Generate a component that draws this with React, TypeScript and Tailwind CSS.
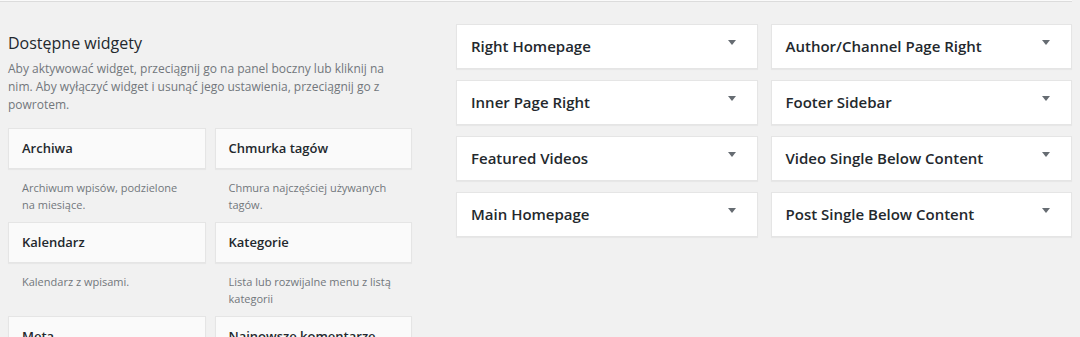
export default function App() {
  const widgets = [
    { name: "Archiwa", desc: "Archiwum wpisów, podzielone na miesiące." },
    { name: "Chmurka tagów", desc: "Chmura najczęściej używanych tagów." },
    { name: "Kalendarz", desc: "Kalendarz z wpisami." },
    { name: "Kategorie", desc: "Lista lub rozwijalne menu z listą kategorii" },
    { name: "Meta", desc: "Logowanie, kanał RSS i link do WordPress.org" },
    { name: "Najnowsze komentarze", desc: "Najnowsze komentarze na stronie." },
  ];

  const sidebars = [
    "Right Homepage",
    "Author/Channel Page Right",
    "Inner Page Right",
    "Footer Sidebar",
    "Featured Videos",
    "Video Single Below Content",
    "Main Homepage",
    "Post Single Below Content",
  ];

  return (
    <div className="h-[337px] overflow-hidden bg-[#f1f1f1] font-['Open_Sans',sans-serif] text-[#23282d]">
      {/* dolna krawędź boxa powyżej */}
      <div className="h-[2px] w-[1072px] bg-[#fafafa] border-b border-[#dcdcdc]" />

      <div className="flex items-start">
        {/* dostępne widgety */}
        <div className="ml-2 w-[404px] pt-[31px]">
          <h2 className="text-[16px] leading-[20px] font-normal">Dostępne widgety</h2>
          <p className="mt-[7px] text-[12px] leading-[18px] text-[#72777c] pr-[10px]">
            Aby aktywować widget, przeciągnij go na panel boczny lub kliknij na nim. Aby wyłączyć widget i usunąć jego ustawienia, przeciągnij go z powrotem.
          </p>
          <div className="mt-[14px] grid grid-cols-2 gap-x-[9px]">
            {widgets.map((w) => (
              <div key={w.name}>
                <div className="h-[41px] flex items-center px-[13px] bg-[#fafafa] border border-[#e5e5e5] shadow-[0_1px_1px_rgba(0,0,0,0.04)] text-[13px] font-semibold">
                  {w.name}
                </div>
                <p className="pl-[14px] pr-[14px] pt-[10px] pb-[9px] text-[11px] leading-[17px] text-[#72777c]">
                  {w.desc}
                </p>
              </div>
            ))}
          </div>
        </div>

        {/* panele boczne */}
        <div className="ml-[44px] pt-[22px] w-[616px] grid grid-cols-2 gap-x-[13px] gap-y-[11px]">
          {sidebars.map((s) => (
            <div
              key={s}
              className="h-[45px] flex items-center justify-between pl-[14px] pr-[21px] bg-white border border-[#e5e5e5] shadow-[0_1px_1px_rgba(0,0,0,0.04)]"
            >
              <span className="text-[15px] font-semibold">{s}</span>
              <span className="mb-[8px] w-0 h-0 border-l-[4px] border-r-[4px] border-t-[5px] border-l-transparent border-r-transparent border-t-[#666c72]" />
            </div>
          ))}
        </div>
      </div>
    </div>
  );
}
